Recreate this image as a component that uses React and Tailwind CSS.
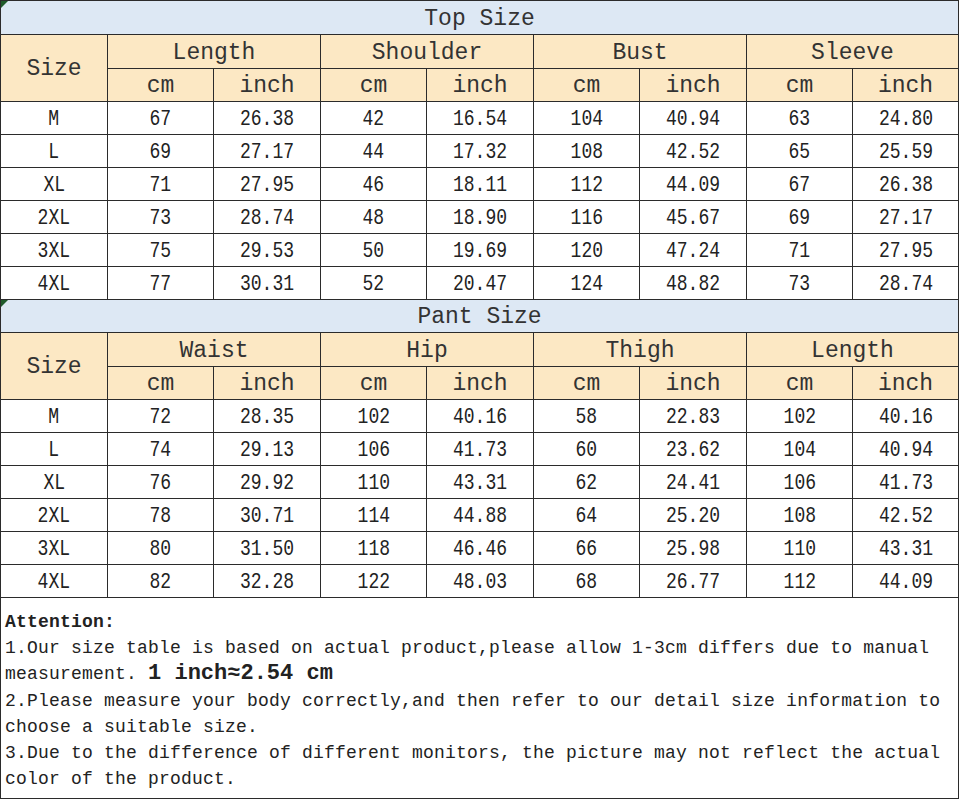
import React from "react";

const widths = [107, 106, 107, 106, 107, 106, 107, 106, 106];

const top = {
  title: "Top Size",
  groups: ["Length", "Shoulder", "Bust", "Sleeve"],
  rows: [
    ["M", "67", "26.38", "42", "16.54", "104", "40.94", "63", "24.80"],
    ["L", "69", "27.17", "44", "17.32", "108", "42.52", "65", "25.59"],
    ["XL", "71", "27.95", "46", "18.11", "112", "44.09", "67", "26.38"],
    ["2XL", "73", "28.74", "48", "18.90", "116", "45.67", "69", "27.17"],
    ["3XL", "75", "29.53", "50", "19.69", "120", "47.24", "71", "27.95"],
    ["4XL", "77", "30.31", "52", "20.47", "124", "48.82", "73", "28.74"],
  ],
};

const pant = {
  title: "Pant Size",
  groups: ["Waist", "Hip", "Thigh", "Length"],
  rows: [
    ["M", "72", "28.35", "102", "40.16", "58", "22.83", "102", "40.16"],
    ["L", "74", "29.13", "106", "41.73", "60", "23.62", "104", "40.94"],
    ["XL", "76", "29.92", "110", "43.31", "62", "24.41", "106", "41.73"],
    ["2XL", "78", "30.71", "114", "44.88", "64", "25.20", "108", "42.52"],
    ["3XL", "80", "31.50", "118", "46.46", "66", "25.98", "110", "43.31"],
    ["4XL", "82", "32.28", "122", "48.03", "68", "26.77", "112", "44.09"],
  ],
};

const cellB = "border border-[#2b2b2b] p-0 pt-[3px] text-center align-middle";
const head = `${cellB} bg-[#fce8c4] text-[23px] text-[#333]`;

function Section({ data, titleH }) {
  return (
    <>
      <tr className={titleH}>
        <td colSpan={9} className={`${cellB} relative bg-[#dde8f4] text-[23px] text-[#333]`}>
          <span className="absolute left-0 top-0 h-0 w-0 border-t-[7px] border-r-[7px] border-t-[#1f5a2a] border-r-transparent" />
          {data.title}
        </td>
      </tr>
      <tr className="h-[34px]">
        <td rowSpan={2} className={head}>
          Size
        </td>
        {data.groups.map((g) => (
          <td key={g} colSpan={2} className={head}>
            {g}
          </td>
        ))}
      </tr>
      <tr className="h-[33px]">
        {data.groups.map((g) => (
          <React.Fragment key={g}>
            <td className={head}>cm</td>
            <td className={head}>inch</td>
          </React.Fragment>
        ))}
      </tr>
      {data.rows.map((r) => (
        <tr key={r[0]} className="h-[33px]">
          {r.map((c, i) => (
            <td key={i} className={`${cellB} bg-white text-[22px] text-[#222]`}>
              <span className="inline-block scale-x-[0.82]">{c}</span>
            </td>
          ))}
        </tr>
      ))}
    </>
  );
}

export default function App() {
  return (
    <div
      className="w-[960px] h-[800px] bg-white"
      style={{ fontFamily: '"Liberation Mono", "DejaVu Sans Mono", monospace' }}
    >
      <div className="w-[959px]">
        <table className="table-fixed border-collapse w-[959px] leading-none">
          <colgroup>
            {widths.map((w, i) => (
              <col key={i} style={{ width: w }} />
            ))}
          </colgroup>
          <tbody>
            <Section data={top} titleH="h-[34px]" />
            <Section data={pant} titleH="h-[33px]" />
          </tbody>
        </table>
        <div className="h-[201px] border-x border-b border-[#2b2b2b] pl-[4px] pt-[11px] text-[18px] leading-[26.2px] tracking-[0.2px] text-[#222]">
          <div className="font-bold">Attention:</div>
          <div>1.Our size table is based on actual product,please allow 1-3cm differs due to manual</div>
          <div>
            measurement. <span className="font-bold text-[22px] tracking-normal">1 inch≈2.54 cm</span>
          </div>
          <div>2.Please measure your body correctly,and then refer to our detail size information to</div>
          <div>choose a suitable size.</div>
          <div>3.Due to the difference of different monitors, the picture may not reflect the actual</div>
          <div>color of the product.</div>
        </div>
      </div>
    </div>
  );
}
